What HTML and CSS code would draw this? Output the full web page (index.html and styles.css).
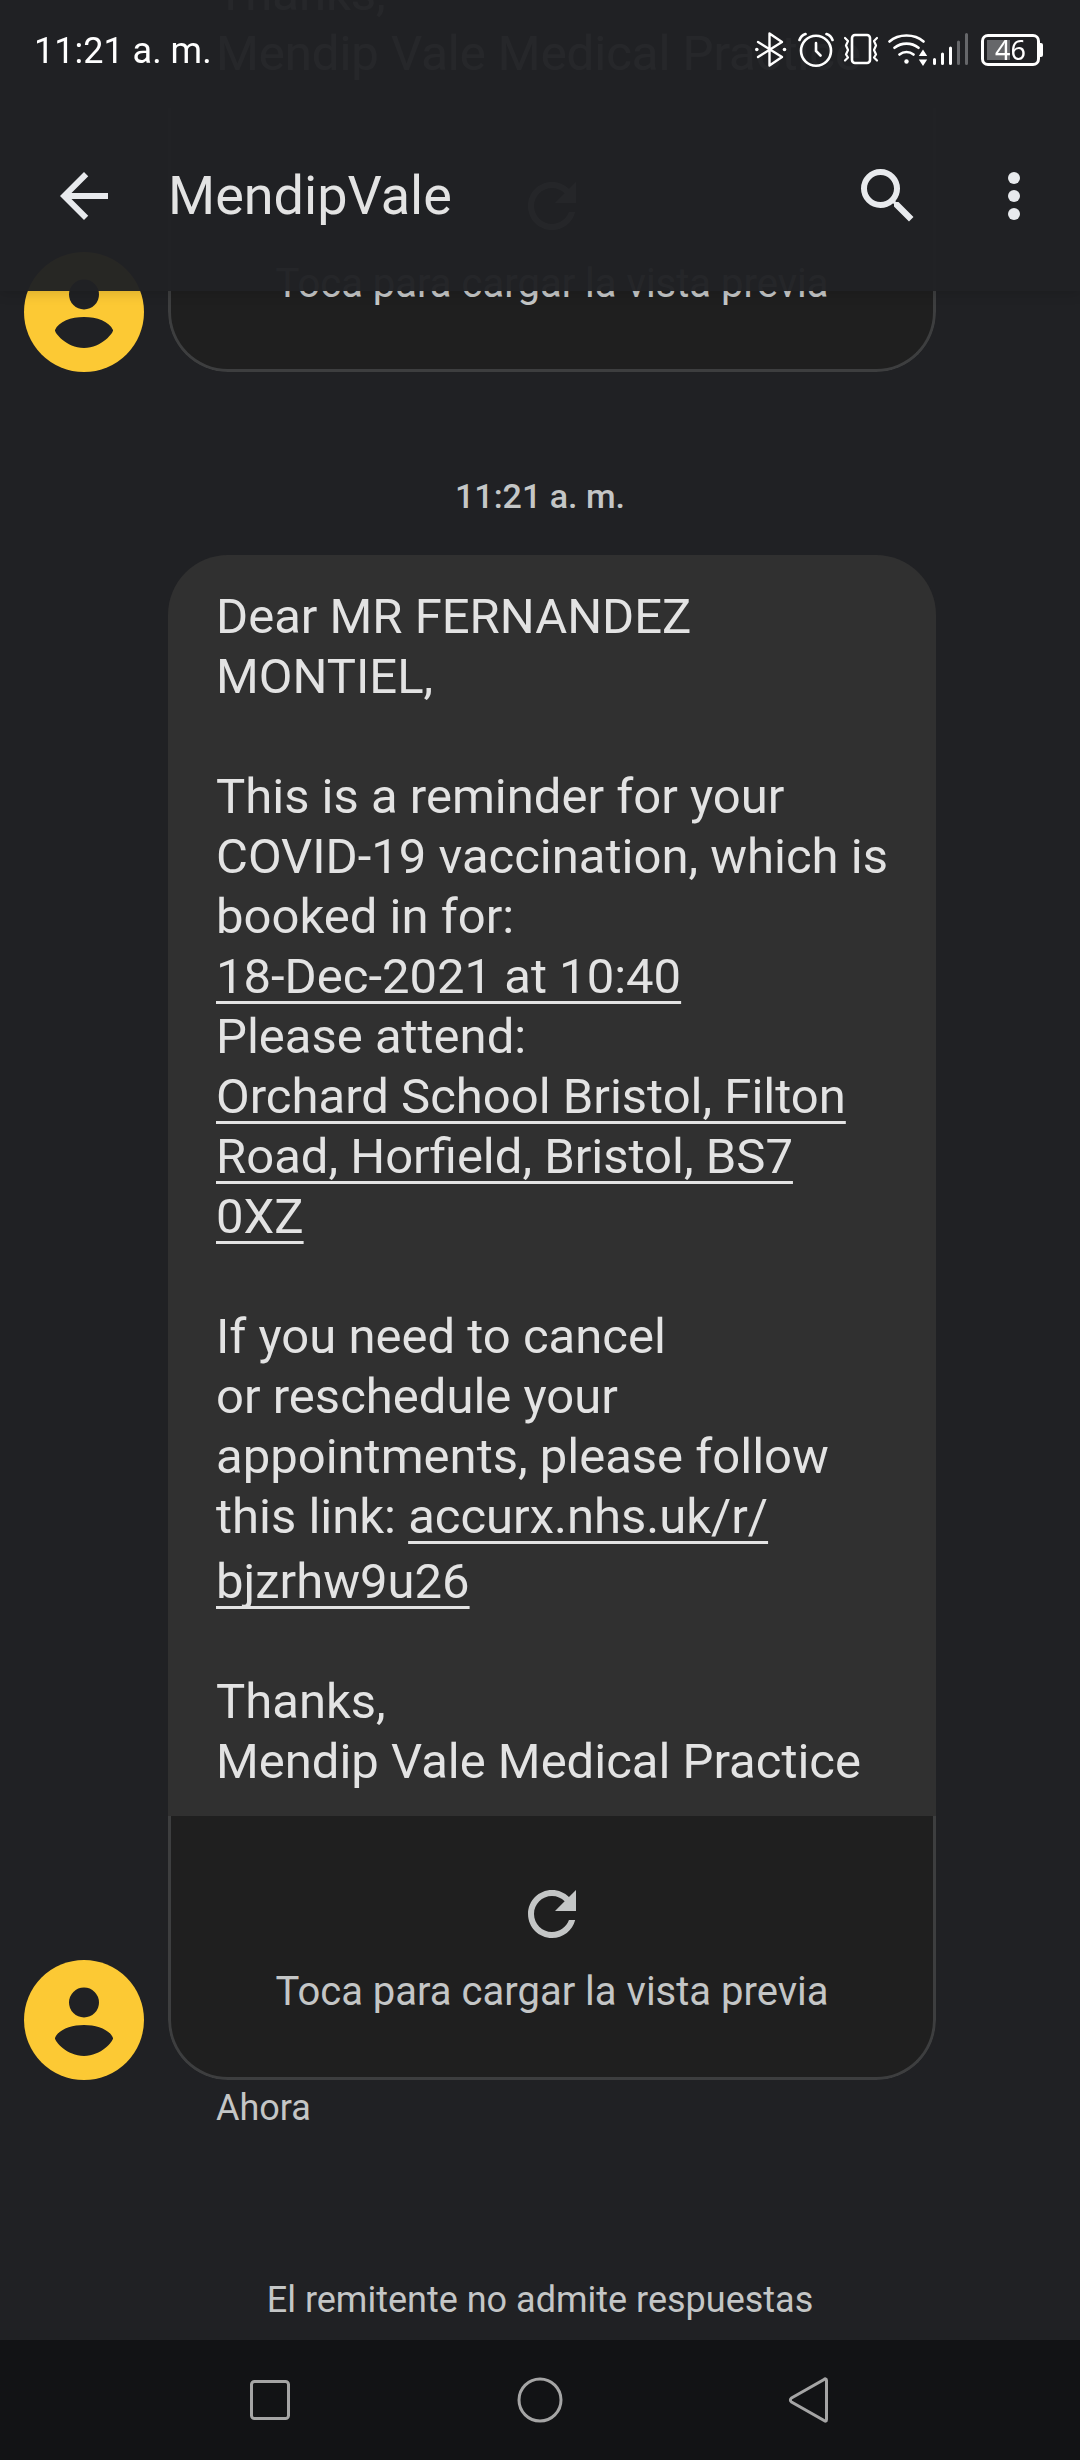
FILE: index.html
```html
<!DOCTYPE html>
<html lang="es">
<head>
<meta charset="utf-8">
<meta name="viewport" content="width=device-width, initial-scale=1">
<title>MendipVale</title>
<link rel="stylesheet" href="styles.css">
</head>
<body>
<div class="app">
  <header class="top">
    <div class="status">
      <span class="status-time">11:21 a. m.</span>
      <div class="status-icons">
        <svg width="34" height="36" viewBox="0 0 34 36" fill="none" stroke="#fff" stroke-width="2.400" stroke-linejoin="round" stroke-linecap="round" aria-hidden="true">
          <path d="M3 10l24 15-12.500 8.500V1.500L27 10 3 25"/>
          <circle cx="1.800" cy="17.500" r="1.800" fill="#fff" stroke="none"/><circle cx="29.500" cy="17.500" r="1.800" fill="#fff" stroke="none"/>
        </svg>
        <svg width="36" height="36" viewBox="0 0 36 36" fill="none" stroke="#fff" stroke-width="2.600" stroke-linecap="round" aria-hidden="true">
          <circle cx="18" cy="18.700" r="15"/><path d="M18 11v8l4.500 4.500M1.500 8c1-3 3-5 6-6M34.500 8c-1-3-3-5-6-6"/>
        </svg>
        <svg width="36" height="36" viewBox="0 0 36 36" fill="none" stroke="#fff" stroke-width="2.600" stroke-linecap="round" stroke-linejoin="round" aria-hidden="true">
          <rect x="9" y="3" width="18" height="28" rx="3"/>
          <path d="M2 6l3 3-2 4.500 2 4.500-2 4.500 2 3-3 3M34 6l-3 3 2 4.500-2 4.500 2 4.500-2 3 3 3" stroke-width="2.200"/>
        </svg>
        <svg width="84" height="36" viewBox="0 0 84 36" fill="none" stroke="#fff" stroke-width="2.600" stroke-linecap="round" aria-hidden="true">
          <path d="M1.500 9.500c9-8 25-8 34 0M6.500 15.800c7-5.600 17-5.600 24 0M11.500 22.500c4-3.400 10-3.400 14 0"/>
          <circle cx="18.500" cy="29.500" r="2.200" fill="#fff" stroke="none"/>
          <path d="M35 17.500l4.200 6.500h-8.400zM35 34l4.200-6.500h-8.400z" fill="#fff" stroke="none"/>
          <path d="M46.500 27.500v4M54.500 22v9.500M62.500 16v15.500" stroke-width="3"/>
          <path d="M70.500 10v21.500M78.500 2.500v29" stroke="#66676a" stroke-width="3"/>
        </svg>
        <span class="battery"><span class="battery-body">46</span></span>
      </div>
    </div>
    <div class="toolbar">
      <button class="icon-button" type="button" aria-label="Atrás"><svg class="icon" viewBox="0 0 24 24"><path d="M20 11H7.830l5.590-5.590L12 4l-8 8 8 8 1.410-1.410L7.830 13H20v-2z"/></svg></button>
      <h1 class="title">MendipVale</h1>
      <div class="actions">
        <button class="icon-button" type="button" aria-label="Buscar"><svg class="icon" viewBox="0 0 24 24"><path d="M15.500 14h-.790l-.280-.270A6.471 6.471 0 0 0 16 9.500 6.500 6.500 0 1 0 9.500 16c1.610 0 3.090-.590 4.230-1.570l.270.280v.790l5 4.990L20.490 19l-4.990-5zm-6 0C7.010 14 5 11.990 5 9.500S7.010 5 9.500 5 14 7.010 14 9.500 11.990 14 9.500 14z"/></svg></button>
        <button class="icon-button" type="button" aria-label="Más opciones"><svg class="icon" viewBox="0 0 24 24"><circle cx="12" cy="6" r="2"/><circle cx="12" cy="12" r="2"/><circle cx="12" cy="18" r="2"/></svg></button>
      </div>
    </div>
  </header>

  <main class="conversation">
    <article class="message">
      <svg class="avatar" viewBox="0 0 120 120" aria-hidden="true"><circle cx="60" cy="60" r="60" fill="#fcc934"/><circle cx="60" cy="42.500" r="15" fill="#202124"/><path d="M31 78C38 60.500 82 60.500 89 78C90 80 78 96 60 96S30 80 31 78z" fill="#202124"/></svg>
      <div class="bubble">
        <div class="text">
          <p>Thanks,<br>Mendip Vale Medical Practice</p>
        </div>
        <button class="preview" type="button">
          <svg class="icon" viewBox="0 0 24 24" aria-hidden="true"><path d="M17.650 6.350C16.200 4.900 14.210 4 12 4c-4.420 0-7.990 3.580-7.990 8s3.570 8 7.990 8c3.730 0 6.840-2.550 7.730-6h-2.080c-.820 2.330-3.040 4-5.650 4-3.310 0-6-2.690-6-6s2.690-6 6-6c1.660 0 3.140.690 4.220 1.780L13 11h7V4l-2.350 2.350z"/></svg>
          <span>Toca para cargar la vista previa</span>
        </button>
      </div>
    </article>

    <time class="timestamp">11:21 a. m.</time>

    <article class="message">
      <svg class="avatar" viewBox="0 0 120 120" aria-hidden="true"><circle cx="60" cy="60" r="60" fill="#fcc934"/><circle cx="60" cy="42.500" r="15" fill="#202124"/><path d="M31 78C38 60.500 82 60.500 89 78C90 80 78 96 60 96S30 80 31 78z" fill="#202124"/></svg>
      <div class="bubble">
        <div class="text">
          <p>Dear MR FERNANDEZ<br>MONTIEL,</p>
          <p>This is a reminder for your<br>COVID-19 vaccination, which is<br>booked in for:<br><a href="#fecha">18-Dec-2021 at 10:40</a><br>Please attend:<br><a href="#mapa">Orchard School Bristol, Filton<br>Road, Horfield, Bristol, BS7<br>0XZ</a></p>
          <p>If you need to cancel<br>or reschedule your<br>appointments, please follow<br>this link: <a href="#enlace">accurx.nhs.uk/r/<br><span class="link-tail">bjzrhw9u26</span></a></p>
          <p>Thanks,<br>Mendip Vale Medical Practice</p>
        </div>
        <button class="preview" type="button">
          <svg class="icon" viewBox="0 0 24 24" aria-hidden="true"><path d="M17.650 6.350C16.200 4.900 14.210 4 12 4c-4.420 0-7.990 3.580-7.990 8s3.570 8 7.990 8c3.730 0 6.840-2.550 7.730-6h-2.080c-.820 2.330-3.040 4-5.650 4-3.310 0-6-2.690-6-6s2.690-6 6-6c1.660 0 3.140.690 4.220 1.780L13 11h7V4l-2.350 2.350z"/></svg>
          <span>Toca para cargar la vista previa</span>
        </button>
      </div>
    </article>
    <p class="sent">Ahora</p>
    <p class="notice">El remitente no admite respuestas</p>
  </main>

  <nav class="system-nav" aria-label="Sistema">
    <button class="nav-button" type="button" aria-label="Recientes"><svg class="nav-icon" viewBox="0 0 48 48"><rect x="5.500" y="5.500" width="37" height="37" rx="3"/></svg></button>
    <button class="nav-button" type="button" aria-label="Inicio"><svg class="nav-icon" viewBox="0 0 48 48"><circle cx="24" cy="24" r="21"/></svg></button>
    <button class="nav-button" type="button" aria-label="Volver"><svg class="nav-icon" viewBox="0 0 48 48"><path d="M40.500 4.500v39c0 2-1.500 2-2.500 1L5.500 26c-1.500-1-1.500-3 0-4L38 3.500c1-1 2.500-1 2.500 1z"/></svg></button>
  </nav>
</div>
</body>
</html>
```
FILE: styles.css
```css
* {
  box-sizing: border-box;
}

body {
  margin: 0;
  background: #202124;
  color: #e3e3e3;
  font-family: Roboto, "Noto Sans", sans-serif;
}

h1,
p {
  margin: 0;
  font-weight: 400;
}

button {
  margin: 0;
  padding: 0;
  border: 0;
  background: none;
  color: inherit;
  font: inherit;
}

.app {
  display: flex;
  flex-direction: column;
  height: 100vh;
}

/* Header floats over the scrolled conversation */
.top {
  position: fixed;
  top: 0;
  left: 0;
  right: 0;
  z-index: 1;
  padding-bottom: 12px;
  background: rgba(32, 33, 36, 0.97);
  box-shadow: 0 2px 12px rgba(0, 0, 0, 0.15);
}

.status {
  display: flex;
  align-items: center;
  justify-content: space-between;
  height: 100px;
  padding: 0 37px 0 34px;
  color: #fff;
}

.status-time {
  padding-top: 2px;
  font-size: 36px;
  line-height: 42px;
}

.status-icons {
  display: flex;
  align-items: center;
  gap: 9px;
}

.battery {
  display: flex;
  align-items: center;
  width: 62px;
}

.battery::after {
  content: "";
  width: 3px;
  height: 14px;
  border-radius: 0 2px 2px 0;
  background: #fff;
}

.battery-body {
  display: flex;
  align-items: center;
  justify-content: center;
  width: 59px;
  height: 32px;
  border: 3px solid #fff;
  border-radius: 7px;
  background: linear-gradient(#66676a, #66676a) 3px center / 23px 20px no-repeat;
  font-family: "Noto Sans", sans-serif;
  font-size: 27px;
  line-height: 28px;
}

.toolbar {
  display: flex;
  align-items: center;
  gap: 48px;
  height: 179px;
  padding: 12px 30px 0 48px;
}

.title {
  flex: 1;
  font-size: 54px;
  line-height: 64px;
}

.actions {
  display: flex;
  gap: 54px;
}

.icon-button {
  color: #e8eaed;
}

.icon {
  display: block;
  width: 72px;
  height: 72px;
  fill: currentColor;
}

/* Newest message stays at the bottom; older ones run off the top */
.conversation {
  display: flex;
  flex: 1;
  flex-direction: column;
  justify-content: flex-end;
  min-height: 0;
  overflow: hidden;
}

.message {
  display: flex;
  flex-shrink: 0;
  align-items: flex-end;
  gap: 24px;
  padding: 0 144px 0 24px;
}

.avatar {
  flex-shrink: 0;
  width: 120px;
  height: 120px;
}

.bubble {
  flex: 1;
  overflow: hidden;
  border-radius: 60px;
}

.text {
  padding: 32px 48px 24px;
  background: #303030;
  font-size: 49px;
  line-height: 60px;
  white-space: nowrap;
}

.text p + p {
  margin-top: 60px;
}

.text a {
  color: inherit;
  text-decoration: underline 3px;
  text-underline-offset: 8px;
  text-decoration-skip-ink: none;
}

.link-tail {
  display: inline-block;
  padding-top: 5px;
  text-decoration: inherit;
}

.preview {
  display: flex;
  flex-direction: column;
  align-items: center;
  gap: 18px;
  width: 100%;
  padding: 62px 24px 61px;
  border: solid #3d3e3f;
  border-width: 0 3px 3px;
  border-radius: 0 0 60px 60px;
  background: #1f1f1f;
  color: #c4c6c6;
  font-size: 40px;
  line-height: 48px;
}

.timestamp {
  margin: 103px 0 38px;
  color: #c4c6c6;
  font-size: 34px;
  font-weight: 500;
  line-height: 42px;
  text-align: center;
}

.sent {
  padding: 7px 216px 0;
  color: #c4c6c6;
  font-size: 36px;
  line-height: 42px;
}

.notice {
  padding: 150px 24px 19px;
  color: #c4c6c6;
  font-size: 36px;
  line-height: 42px;
  text-align: center;
}

.system-nav {
  display: grid;
  grid-template-columns: repeat(3, 1fr);
  align-items: center;
  height: 120px;
  padding: 0 12.5%;
  background: #121315;
}

.nav-button {
  display: flex;
  justify-content: center;
}

.nav-icon {
  width: 48px;
  height: 48px;
  fill: none;
  stroke: #a5a5a5;
  stroke-width: 3;
}
```
